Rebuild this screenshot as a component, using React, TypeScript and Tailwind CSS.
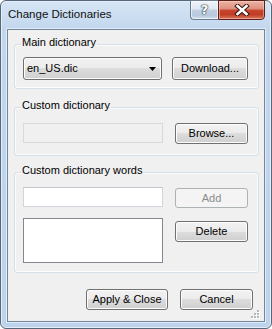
import React from "react";

const font = { fontFamily: '"Liberation Sans", Arial, sans-serif' };

const btnCls =
  "flex items-center justify-center rounded-[3px] border border-[#707070] bg-[linear-gradient(to_bottom,#f2f2f2_0%,#ebebeb_50%,#dddddd_50%,#cfcfcf_100%)] shadow-[inset_0_0_0_1px_#fcfcfc] text-[11px] leading-[13px] text-black";

function Group({
  label,
  className,
  children,
}: {
  label: string;
  className: string;
  children: React.ReactNode;
}) {
  return (
    <div
      className={
        "relative ml-[6px] w-[245px] rounded-[3px] border border-[#d5dfe5] shadow-[inset_0_0_0_1px_#fbfcfd] " +
        className
      }
    >
      <span className="absolute left-[6px] top-[-9px] bg-[#f0f0f0] px-[1px] text-[11px] leading-[13px] text-black whitespace-nowrap">
        {label}
      </span>
      {children}
    </div>
  );
}

export default function App() {
  return (
    <div
      style={font}
      className="flex h-[329px] w-[272px] flex-col rounded-[6px] border border-[#56677a] bg-[linear-gradient(to_bottom,#d6e5f5_0px,#c2d7ee_28px,#bcd3eb_100%)] px-[6px] pb-[6px] shadow-[inset_0_0_0_1px_#e6eff9]"
    >
      {/* Title bar */}
      <div className="flex h-[28px] items-start justify-between">
        <span className="pl-[1px] pt-[6px] text-[11.5px] leading-[14px] text-[#111] whitespace-nowrap">
          Change Dictionaries
        </span>
        <div className="-mt-[1px] flex">
          <div className="flex h-[20px] w-[28px] items-center justify-center rounded-bl-[4px] border border-r-0 border-[#6a7c90] bg-[linear-gradient(to_bottom,#f1f5fa_0%,#dfe8f2_45%,#c0d0e1_50%,#b8cade_80%,#d2e0ee_100%)] shadow-[inset_0_0_0_1px_rgba(255,255,255,0.6)]">
            <span
              className="text-[13px] font-bold leading-[14px] text-white [text-shadow:0_0_1px_#2c3e50,0_0_1px_#2c3e50,0_0_2px_#2c3e50]"
              style={{ fontFamily: '"DejaVu Sans", sans-serif' }}
            >
              ?
            </span>
          </div>
          <div className="flex h-[20px] w-[47px] items-center justify-center rounded-br-[4px] border border-[#5c1f17] bg-[linear-gradient(to_bottom,#ebb4a7_0%,#de8e7d_45%,#c8462f_50%,#c03c24_75%,#d9785d_100%)] shadow-[inset_0_0_0_1px_rgba(255,220,210,0.45)]">
            <svg width="16" height="12" viewBox="0 0 16 12">
              <path d="M3.5 2 L12.5 10 M12.5 2 L3.5 10" stroke="#3b1a14" strokeWidth="4.6" strokeLinecap="square" />
              <path d="M3.5 2 L12.5 10 M12.5 2 L3.5 10" stroke="#ffffff" strokeWidth="2.6" strokeLinecap="square" />
            </svg>
          </div>
        </div>
      </div>

      {/* Client area */}
      <div className="relative flex h-[293px] flex-col border border-[#73879c] bg-[#f0f0f0] shadow-[0_0_0_1px_#e3edf8]">
        {/* Main dictionary */}
        <Group label="Main dictionary" className="mt-[14px] h-[45px] pl-[8px] pt-[12px]">
          <div className="flex items-start gap-[10px]">
            <div className={btnCls + " h-[23px] w-[139px] !justify-between pl-[3px] pr-[5px]"}>
              <span>en_US.dic</span>
              <svg width="7" height="4" viewBox="0 0 7 4">
                <path d="M0 0 H7 L3.5 4 Z" fill="#000" />
              </svg>
            </div>
            <div className={btnCls + " h-[23px] w-[76px]"}>Download...</div>
          </div>
        </Group>

        {/* Custom dictionary */}
        <Group label="Custom dictionary" className="mt-[18px] h-[49px] pl-[8px] pt-[15px]">
          <div className="flex items-start gap-[12px]">
            <div className="h-[20px] w-[140px] border border-[#d6d9dd] bg-[#f0f0f0]" />
            <div className={btnCls + " h-[21px] w-[73px]"}>Browse...</div>
          </div>
        </Group>

        {/* Custom dictionary words */}
        <Group label="Custom dictionary words" className="mt-[16px] h-[101px] pl-[8px] pt-[14px]">
          <div className="flex items-start gap-[12px]">
            <div className="flex flex-col">
              <div className="h-[20px] w-[140px] border border-[#d2d6dc] border-t-[#c3c6cc] bg-white" />
              <div className="mt-[11px] h-[45px] w-[140px] border border-[#828790] bg-white" />
            </div>
            <div className="flex flex-col">
              <div className="mt-[1px] flex h-[20px] w-[73px] items-center justify-center rounded-[3px] border border-[#adb2b5] bg-[#f4f4f4] text-[11px] leading-[13px] text-[#8b8b8b]">
                Add
              </div>
              <div className={btnCls + " mt-[13px] h-[21px] w-[73px]"}>Delete</div>
            </div>
          </div>
        </Group>

        {/* Bottom buttons */}
        <div className="mt-[16px] flex justify-end gap-[12px] pr-[11px]">
          <div className={btnCls + " h-[21px] w-[82px]"}>Apply &amp; Close</div>
          <div className={btnCls + " h-[21px] w-[73px]"}>Cancel</div>
        </div>

        {/* Size grip */}
        <svg className="absolute bottom-[2px] right-[4px]" width="9" height="9" viewBox="0 0 9 9">
          {[
            [6, 0],
            [3, 3],
            [6, 3],
            [0, 6],
            [3, 6],
            [6, 6],
          ].map(([x, y], i) => (
            <g key={i}>
              <rect x={x + 1} y={y + 1} width="2" height="2" fill="#ffffff" />
              <rect x={x} y={y} width="2" height="2" fill="#b4b9bf" />
            </g>
          ))}
        </svg>
      </div>
    </div>
  );
}
